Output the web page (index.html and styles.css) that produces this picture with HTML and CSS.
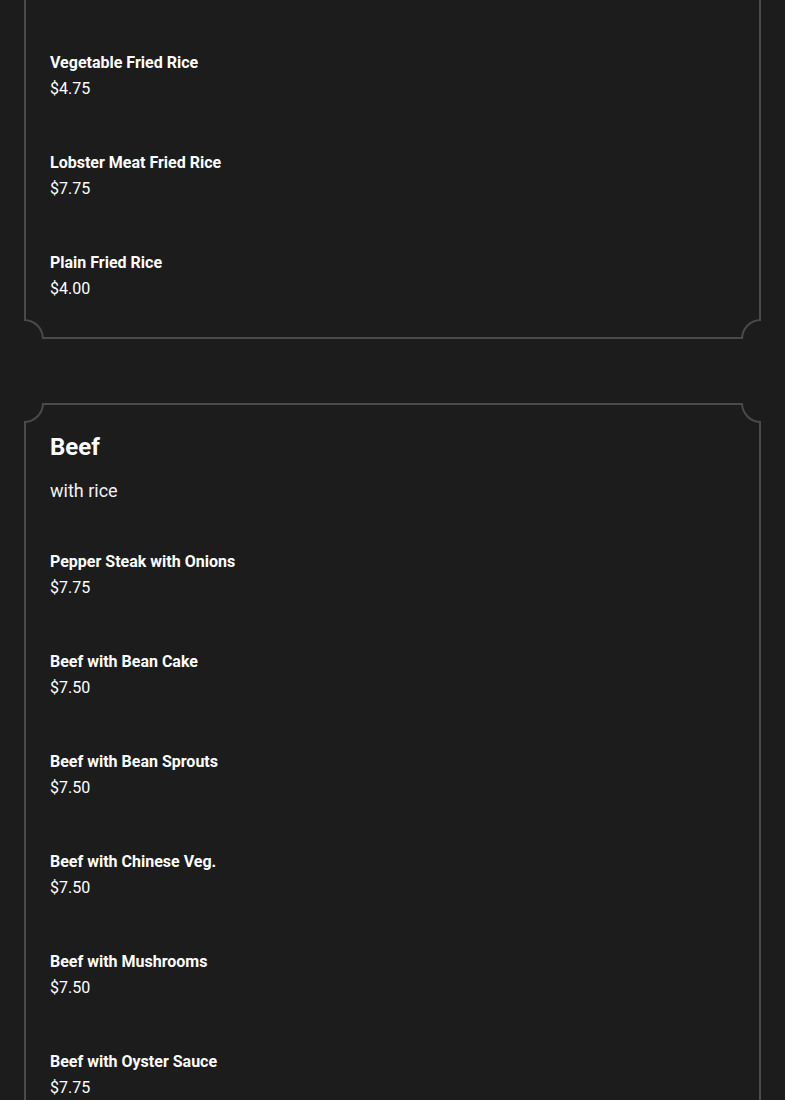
FILE: index.html
```html
<!DOCTYPE html>
<html lang="en">
<head>
<meta charset="utf-8">
<title>Menu</title>
<link rel="stylesheet" href="styles.css">
</head>
<body>
<main class="menu">
  <section class="card card--cut">
    <ul class="items">
      <li class="item"><span class="item-name">Vegetable Fried Rice</span><span class="item-price">$4.75</span></li>
      <li class="item"><span class="item-name">Lobster Meat Fried Rice</span><span class="item-price">$7.75</span></li>
      <li class="item"><span class="item-name">Plain Fried Rice</span><span class="item-price">$4.00</span></li>
    </ul>
    <span class="corner corner--bl"></span>
    <span class="corner corner--br"></span>
  </section>

  <section class="card">
    <h2 class="card-title">Beef</h2>
    <p class="card-sub">with rice</p>
    <ul class="items">
      <li class="item"><span class="item-name">Pepper Steak with Onions</span><span class="item-price">$7.75</span></li>
      <li class="item"><span class="item-name">Beef with Bean Cake</span><span class="item-price">$7.50</span></li>
      <li class="item"><span class="item-name">Beef with Bean Sprouts</span><span class="item-price">$7.50</span></li>
      <li class="item"><span class="item-name">Beef with Chinese Veg.</span><span class="item-price">$7.50</span></li>
      <li class="item"><span class="item-name">Beef with Mushrooms</span><span class="item-price">$7.50</span></li>
      <li class="item"><span class="item-name">Beef with Oyster Sauce</span><span class="item-price">$7.75</span></li>
    </ul>
    <span class="corner corner--tl"></span>
    <span class="corner corner--tr"></span>
    <span class="corner corner--bl"></span>
    <span class="corner corner--br"></span>
  </section>
</main>
</body>
</html>
```

FILE: styles.css
```css
html, body {
  margin: 0;
  padding: 0;
  background: #1c1c1c;
}

body {
  font-family: Roboto, "Liberation Sans", sans-serif;
  color: #ffffff;
}

.menu {
  display: flex;
  flex-direction: column;
  gap: 64px;
  padding: 0 24px 40px;
}

.card {
  position: relative;
  border: 2px solid #4a4a4a;
  padding: 24px 24px 35px;
}

.card--cut {
  border-top: none;
  padding-top: 50px;
}

.card-title {
  margin: 0;
  font-size: 24px;
  line-height: 32px;
  font-weight: 700;
  padding-top: 2px;
}

.card-sub {
  margin: 14px 0 44px;
  font-size: 18px;
  line-height: 28px;
  font-weight: 400;
  color: #f2f2f2;
}

.items {
  list-style: none;
  margin: 0;
  padding: 0;
  display: flex;
  flex-direction: column;
  gap: 48px;
}

.item {
  display: flex;
  flex-direction: column;
}

.item-name {
  font-size: 16px;
  line-height: 26px;
  font-weight: 700;
}

.item-price {
  font-size: 16px;
  line-height: 26px;
  font-weight: 400;
}

.corner {
  position: absolute;
  width: 20px;
  height: 20px;
  box-sizing: border-box;
  background: #1c1c1c;
  border: 0 solid #4a4a4a;
}

.corner--bl {
  left: -2px;
  bottom: -2px;
  border-top-width: 2px;
  border-right-width: 2px;
  border-top-right-radius: 20px;
}

.corner--br {
  right: -2px;
  bottom: -2px;
  border-top-width: 2px;
  border-left-width: 2px;
  border-top-left-radius: 20px;
}

.corner--tl {
  left: -2px;
  top: -2px;
  border-bottom-width: 2px;
  border-right-width: 2px;
  border-bottom-right-radius: 20px;
}

.corner--tr {
  right: -2px;
  top: -2px;
  border-bottom-width: 2px;
  border-left-width: 2px;
  border-bottom-left-radius: 20px;
}
```
